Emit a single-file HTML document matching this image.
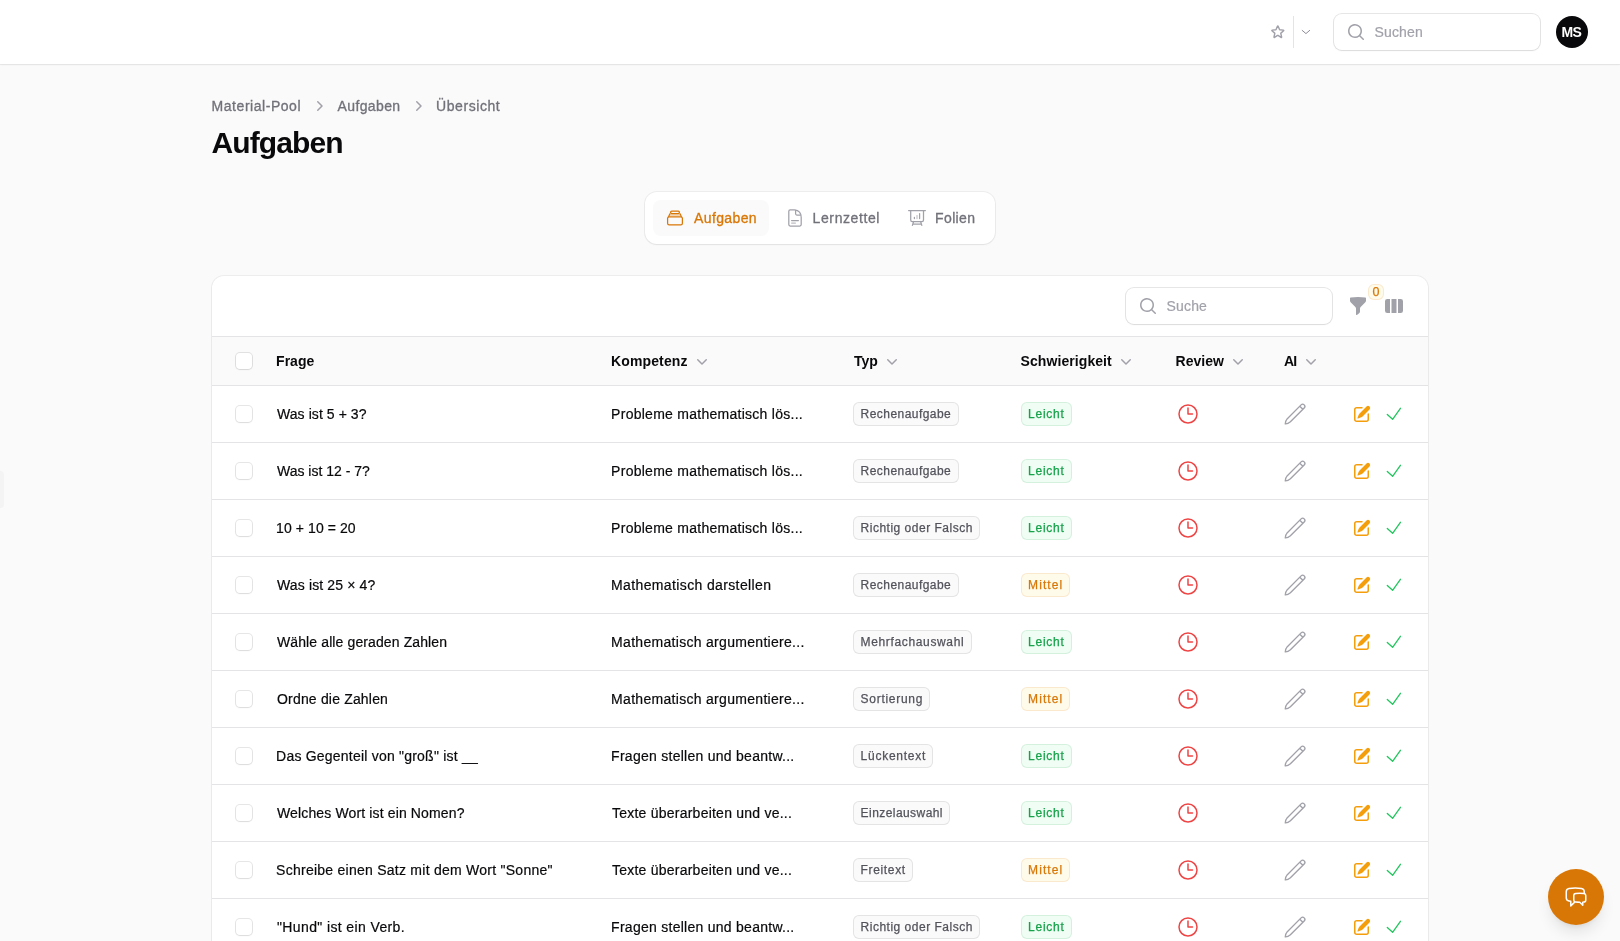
<!DOCTYPE html>
<html lang="de"><head><meta charset="utf-8"><title>Aufgaben</title>
<style>
*{box-sizing:border-box;margin:0;padding:0}
html,body{width:1620px;height:941px;overflow:hidden;background:#fafafa;font-family:"Liberation Sans",sans-serif;}
.abs{position:absolute}
.t{position:absolute;white-space:pre;line-height:1;}
.topbar{position:absolute;left:0;top:0;width:1620px;height:64px;background:#fff;box-shadow:0 0 0 1px rgba(9,9,11,.05),0 1px 2px rgba(0,0,0,.05)}
.inp{position:absolute;background:#fff;border-radius:8px;box-shadow:0 0 0 1px rgba(9,9,11,.1),0 1px 2px rgba(0,0,0,.05)}
.card{position:absolute;background:#fff;border-radius:12px;box-shadow:0 0 0 1px rgba(9,9,11,.05),0 1px 2px rgba(0,0,0,.05)}
.hl{position:absolute;left:212px;width:1216px;height:1px;background:#e4e4e7}
.cb{position:absolute;left:236px;width:16px;height:16px;border-radius:4px;background:#fff;box-shadow:0 0 0 1px rgba(9,9,11,.1),0 1px 2px rgba(0,0,0,.05)}
.bd{position:absolute;border-radius:6px;border:1px solid transparent}
svg{position:absolute;overflow:visible}
</style></head><body>
<div class="topbar"></div>
<!-- star -->
<svg style="left:1270.3px;top:23.6px" width="15.6" height="15.6" viewBox="0 0 24 24" fill="none" stroke="#a1a1aa" stroke-width="2.2" stroke-linecap="round" stroke-linejoin="round"><path d="M11.48 3.499a.562.562 0 0 1 1.04 0l2.125 5.111a.563.563 0 0 0 .475.345l5.518.442c.499.04.701.663.321.988l-4.204 3.602a.563.563 0 0 0-.182.557l1.285 5.385a.562.562 0 0 1-.84.61l-4.725-2.885a.562.562 0 0 0-.586 0L6.982 20.54a.562.562 0 0 1-.84-.61l1.285-5.386a.562.562 0 0 0-.182-.557l-4.204-3.602a.562.562 0 0 1 .321-.988l5.518-.442a.563.563 0 0 0 .475-.345L11.48 3.5Z"/></svg>
<div class="abs" style="left:1293px;top:16px;width:1px;height:32px;background:#e4e4e7"></div>
<svg style="left:0;top:0" width="1620" height="64"><polyline points="1302.2,30.4 1305.95,33.6 1309.7,30.4" fill="none" stroke="#8e8e98" stroke-width="1" stroke-linecap="round" stroke-linejoin="round"/></svg>
<div class="inp" style="left:1334px;top:14px;width:206px;height:36px"></div>
<svg style="left:1346px;top:22px" width="20" height="20" viewBox="0 0 20 20" fill="#a1a1aa"><path fill-rule="evenodd" clip-rule="evenodd" d="M9 3.5a5.5 5.5 0 1 0 0 11 5.5 5.5 0 0 0 0-11ZM2 9a7 7 0 1 1 12.452 4.391l3.328 3.329a.75.75 0 1 1-1.06 1.06l-3.329-3.328A7 7 0 0 1 2 9Z"/></svg>
<div class="abs" style="left:1556px;top:16px;width:32px;height:32px;border-radius:50%;background:#09090b"></div>

<!-- breadcrumb chevrons -->
<svg style="left:309px;top:96px" width="20" height="20" viewBox="0 0 20 20" fill="#a1a1aa"><path fill-rule="evenodd" clip-rule="evenodd" d="M8.22 5.22a.75.75 0 0 1 1.06 0l4.25 4.25a.75.75 0 0 1 0 1.06l-4.25 4.25a.75.75 0 0 1-1.06-1.06L11.94 10 8.22 6.28a.75.75 0 0 1 0-1.06Z"/></svg>
<svg style="left:408px;top:96px" width="20" height="20" viewBox="0 0 20 20" fill="#a1a1aa"><path fill-rule="evenodd" clip-rule="evenodd" d="M8.22 5.22a.75.75 0 0 1 1.06 0l4.25 4.25a.75.75 0 0 1 0 1.06l-4.25 4.25a.75.75 0 0 1-1.06-1.06L11.94 10 8.22 6.28a.75.75 0 0 1 0-1.06Z"/></svg>

<!-- tabs -->
<div class="card" style="left:645px;top:192px;width:350px;height:52px"></div>
<div class="abs" style="left:653px;top:200px;width:116px;height:36px;border-radius:8px;background:#fafafa"></div>
<svg style="left:0;top:0" width="1620" height="941"><g fill="none" stroke="#d97706" stroke-width="1.25" stroke-linejoin="round" stroke-linecap="round"><rect x="667.6" y="216.75" width="14.8" height="8" rx="1.6"/><path d="M668.7,216.6 L669.9,213.8 M681.3,216.6 L680.1,213.8"/><path d="M670.3,215 L679.7,215" stroke-opacity=".55" stroke-width="1.1"/><rect x="670.6" y="211.05" width="8.8" height="2.45" rx="1.1"/></g></svg>
<svg style="left:0;top:0" width="1620" height="941"><g fill="none" stroke="#a1a1aa" stroke-width="1.25" stroke-linejoin="round" stroke-linecap="round"><path d="M790.2,209.9 L794.5,209.9 Q801.2,210.5 801.2,217.5 L801.2,224.6 Q801.2,226 799.8,226 L790.2,226 Q788.8,226 788.8,224.6 L788.8,211.3 Q788.8,209.9 790.2,209.9 Z"/><path d="M795.6,210.3 L795.6,213.8 Q795.6,215 796.8,215 L800.6,215"/><path d="M791.6,220.5 L798.4,220.5"/><path d="M791.6,223.1 L795.4,223.1" stroke-opacity=".7"/></g></svg>
<svg style="left:0;top:0" width="1620" height="941"><g fill="none" stroke="#a1a1aa" stroke-width="1.25" stroke-linejoin="round" stroke-linecap="round"><path d="M908.6,210.5 L925.4,210.5"/><path d="M910.7,210.5 L910.7,219.9 Q910.7,221.5 912.3,221.5 L921.9,221.5 Q923.5,221.5 923.5,219.9 L923.5,210.5"/><path d="M913.6,221.5 L912.4,225.4 M920.6,221.5 L921.8,225.4 M913.2,224 L921,224"/><path d="M914.4,217.4 L914.4,218.6 M919.6,213.5 L919.6,218.6"/><path d="M917,215.6 L917,218.6" stroke-opacity=".6"/></g></svg>

<!-- table card -->
<div class="card" style="left:212px;top:276px;width:1216px;height:700px"></div>
<div class="abs" style="left:212px;top:337px;width:1216px;height:48px;background:#fafafa"></div>
<div class="hl" style="top:336px"></div>
<div class="hl" style="top:385px"></div>
<div class="hl" style="top:442px"></div>
<div class="hl" style="top:499px"></div>
<div class="hl" style="top:556px"></div>
<div class="hl" style="top:613px"></div>
<div class="hl" style="top:670px"></div>
<div class="hl" style="top:727px"></div>
<div class="hl" style="top:784px"></div>
<div class="hl" style="top:841px"></div>
<div class="hl" style="top:898px"></div>
<div class="hl" style="top:955px"></div>
<div class="inp" style="left:1126px;top:288px;width:206px;height:36px"></div>
<svg style="left:1138px;top:296px" width="20" height="20" viewBox="0 0 20 20" fill="#a1a1aa"><path fill-rule="evenodd" clip-rule="evenodd" d="M9 3.5a5.5 5.5 0 1 0 0 11 5.5 5.5 0 0 0 0-11ZM2 9a7 7 0 1 1 12.452 4.391l3.328 3.329a.75.75 0 1 1-1.06 1.06l-3.329-3.328A7 7 0 0 1 2 9Z"/></svg>
<svg style="left:1348px;top:296px" width="20" height="20" viewBox="0 0 20 20" fill="#a1a1aa"><path fill-rule="evenodd" clip-rule="evenodd" d="M2.628 1.601C5.028 1.206 7.49 1 10 1s4.973.206 7.372.601a.75.75 0 0 1 .628.74v2.288a2.25 2.25 0 0 1-.659 1.59l-4.682 4.683a2.25 2.25 0 0 0-.659 1.59v3.037c0 .684-.31 1.33-.844 1.757l-1.937 1.55A.75.75 0 0 1 8 18.25v-5.757a2.25 2.25 0 0 0-.659-1.591L2.659 6.22A2.25 2.25 0 0 1 2 4.629V2.34a.75.75 0 0 1 .628-.74Z"/></svg>
<div class="abs" style="left:1368px;top:284px;width:16px;height:16px;border-radius:6px;background:#fffbeb;border:1px solid rgba(217,119,6,.13)"></div>
<svg style="left:1384px;top:296px" width="20" height="20" viewBox="0 0 20 20" fill="#a1a1aa"><path d="M14 17h2.75A2.25 2.25 0 0 0 19 14.75v-9.5A2.25 2.25 0 0 0 16.75 3H14v14ZM12.5 3h-5v14h5V3ZM3.25 3H6v14H3.25A2.25 2.25 0 0 1 1 14.75v-9.5A2.25 2.25 0 0 1 3.25 3Z"/></svg>
<svg style="left:692.3px;top:351px" width="20" height="20" viewBox="0 0 20 20" fill="#a1a1aa"><path fill-rule="evenodd" clip-rule="evenodd" d="M5.22 8.22a.75.75 0 0 1 1.06 0L10 11.94l3.72-3.72a.75.75 0 1 1 1.06 1.06l-4.25 4.25a.75.75 0 0 1-1.06 0L5.22 9.28a.75.75 0 0 1 0-1.06Z"/></svg>
<svg style="left:882px;top:351px" width="20" height="20" viewBox="0 0 20 20" fill="#a1a1aa"><path fill-rule="evenodd" clip-rule="evenodd" d="M5.22 8.22a.75.75 0 0 1 1.06 0L10 11.94l3.72-3.72a.75.75 0 1 1 1.06 1.06l-4.25 4.25a.75.75 0 0 1-1.06 0L5.22 9.28a.75.75 0 0 1 0-1.06Z"/></svg>
<svg style="left:1116.2px;top:351px" width="20" height="20" viewBox="0 0 20 20" fill="#a1a1aa"><path fill-rule="evenodd" clip-rule="evenodd" d="M5.22 8.22a.75.75 0 0 1 1.06 0L10 11.94l3.72-3.72a.75.75 0 1 1 1.06 1.06l-4.25 4.25a.75.75 0 0 1-1.06 0L5.22 9.28a.75.75 0 0 1 0-1.06Z"/></svg>
<svg style="left:1228px;top:351px" width="20" height="20" viewBox="0 0 20 20" fill="#a1a1aa"><path fill-rule="evenodd" clip-rule="evenodd" d="M5.22 8.22a.75.75 0 0 1 1.06 0L10 11.94l3.72-3.72a.75.75 0 1 1 1.06 1.06l-4.25 4.25a.75.75 0 0 1-1.06 0L5.22 9.28a.75.75 0 0 1 0-1.06Z"/></svg>
<svg style="left:1301px;top:351px" width="20" height="20" viewBox="0 0 20 20" fill="#a1a1aa"><path fill-rule="evenodd" clip-rule="evenodd" d="M5.22 8.22a.75.75 0 0 1 1.06 0L10 11.94l3.72-3.72a.75.75 0 1 1 1.06 1.06l-4.25 4.25a.75.75 0 0 1-1.06 0L5.22 9.28a.75.75 0 0 1 0-1.06Z"/></svg>
<div class="cb" style="top:353px"></div>
<div class="cb" style="top:406px"></div>
<div class="cb" style="top:463px"></div>
<div class="cb" style="top:520px"></div>
<div class="cb" style="top:577px"></div>
<div class="cb" style="top:634px"></div>
<div class="cb" style="top:691px"></div>
<div class="cb" style="top:748px"></div>
<div class="cb" style="top:805px"></div>
<div class="cb" style="top:862px"></div>
<div class="cb" style="top:919px"></div>
<div class="bd" style="left:853px;top:402px;width:106.0px;height:24px;background:#fafafa;border-color:rgba(82,82,91,0.13)"></div>
<div class="bd" style="left:1021px;top:402px;width:51.0px;height:24px;background:#f0fdf4;border-color:rgba(22,163,74,0.13)"></div>
<div class="bd" style="left:853px;top:459px;width:106.0px;height:24px;background:#fafafa;border-color:rgba(82,82,91,0.13)"></div>
<div class="bd" style="left:1021px;top:459px;width:51.0px;height:24px;background:#f0fdf4;border-color:rgba(22,163,74,0.13)"></div>
<div class="bd" style="left:853px;top:516px;width:127.0px;height:24px;background:#fafafa;border-color:rgba(82,82,91,0.13)"></div>
<div class="bd" style="left:1021px;top:516px;width:51.0px;height:24px;background:#f0fdf4;border-color:rgba(22,163,74,0.13)"></div>
<div class="bd" style="left:853px;top:573px;width:106.0px;height:24px;background:#fafafa;border-color:rgba(82,82,91,0.13)"></div>
<div class="bd" style="left:1021px;top:573px;width:49.0px;height:24px;background:#fffbeb;border-color:rgba(217,119,6,0.13)"></div>
<div class="bd" style="left:853px;top:630px;width:119.0px;height:24px;background:#fafafa;border-color:rgba(82,82,91,0.13)"></div>
<div class="bd" style="left:1021px;top:630px;width:51.0px;height:24px;background:#f0fdf4;border-color:rgba(22,163,74,0.13)"></div>
<div class="bd" style="left:853px;top:687px;width:77.0px;height:24px;background:#fafafa;border-color:rgba(82,82,91,0.13)"></div>
<div class="bd" style="left:1021px;top:687px;width:49.0px;height:24px;background:#fffbeb;border-color:rgba(217,119,6,0.13)"></div>
<div class="bd" style="left:853px;top:744px;width:80.0px;height:24px;background:#fafafa;border-color:rgba(82,82,91,0.13)"></div>
<div class="bd" style="left:1021px;top:744px;width:51.0px;height:24px;background:#f0fdf4;border-color:rgba(22,163,74,0.13)"></div>
<div class="bd" style="left:853px;top:801px;width:97.0px;height:24px;background:#fafafa;border-color:rgba(82,82,91,0.13)"></div>
<div class="bd" style="left:1021px;top:801px;width:51.0px;height:24px;background:#f0fdf4;border-color:rgba(22,163,74,0.13)"></div>
<div class="bd" style="left:853px;top:858px;width:60.0px;height:24px;background:#fafafa;border-color:rgba(82,82,91,0.13)"></div>
<div class="bd" style="left:1021px;top:858px;width:49.0px;height:24px;background:#fffbeb;border-color:rgba(217,119,6,0.13)"></div>
<div class="bd" style="left:853px;top:915px;width:127.0px;height:24px;background:#fafafa;border-color:rgba(82,82,91,0.13)"></div>
<div class="bd" style="left:1021px;top:915px;width:51.0px;height:24px;background:#f0fdf4;border-color:rgba(22,163,74,0.13)"></div>
<svg style="left:1176px;top:402px" width="24" height="24" viewBox="0 0 24 24" fill="none" stroke="#ef4444" stroke-width="1.5" stroke-linecap="round" stroke-linejoin="round"><path d="M12 6v6h4.5m4.5 0a9 9 0 1 1-18 0 9 9 0 0 1 18 0Z"/></svg>
<svg style="left:0;top:0" width="1620" height="941"><g transform="translate(1284.9,424.2) rotate(-45)" fill="none" stroke="#a1a1aa" stroke-width="1.35" stroke-linejoin="round" stroke-linecap="round"><path d="M0.5,0 Q2,-1.85 5.6,-2.2 L25.1,-2.2 A2.2,2.2 0 0 1 25.1,2.2 L5.6,2.2 Q2,1.85 0.5,0 Z M23.2,-2.2 L23.2,2.2"/></g></svg>
<svg style="left:1352px;top:404px" width="20" height="20" viewBox="0 0 20 20" fill="#f59e0b"><path d="m5.433 13.917 1.262-3.155A4 4 0 0 1 7.58 9.42l6.92-6.918a2.121 2.121 0 0 1 3 3l-6.92 6.918c-.383.383-.84.685-1.343.886l-3.154 1.262a.5.5 0 0 1-.65-.65Z"/><path d="M3.5 5.75c0-.69.56-1.25 1.25-1.25H10A.75.75 0 0 0 10 3H4.75A2.75 2.75 0 0 0 2 5.75v9.5A2.75 2.75 0 0 0 4.75 18h9.5A2.75 2.75 0 0 0 17 15.25V10a.75.75 0 0 0-1.5 0v5.25c0 .69-.56 1.25-1.25 1.25h-9.5c-.69 0-1.25-.56-1.25-1.25v-9.5Z"/></svg>
<svg style="left:0;top:0" width="1620" height="941"><polyline points="1387.3,414.5 1392.6,419.3 1400.4,408.3" fill="none" stroke="#22c55e" stroke-width="1.3" stroke-linecap="round" stroke-linejoin="round"/></svg>
<svg style="left:1176px;top:459px" width="24" height="24" viewBox="0 0 24 24" fill="none" stroke="#ef4444" stroke-width="1.5" stroke-linecap="round" stroke-linejoin="round"><path d="M12 6v6h4.5m4.5 0a9 9 0 1 1-18 0 9 9 0 0 1 18 0Z"/></svg>
<svg style="left:0;top:0" width="1620" height="941"><g transform="translate(1284.9,481.2) rotate(-45)" fill="none" stroke="#a1a1aa" stroke-width="1.35" stroke-linejoin="round" stroke-linecap="round"><path d="M0.5,0 Q2,-1.85 5.6,-2.2 L25.1,-2.2 A2.2,2.2 0 0 1 25.1,2.2 L5.6,2.2 Q2,1.85 0.5,0 Z M23.2,-2.2 L23.2,2.2"/></g></svg>
<svg style="left:1352px;top:461px" width="20" height="20" viewBox="0 0 20 20" fill="#f59e0b"><path d="m5.433 13.917 1.262-3.155A4 4 0 0 1 7.58 9.42l6.92-6.918a2.121 2.121 0 0 1 3 3l-6.92 6.918c-.383.383-.84.685-1.343.886l-3.154 1.262a.5.5 0 0 1-.65-.65Z"/><path d="M3.5 5.75c0-.69.56-1.25 1.25-1.25H10A.75.75 0 0 0 10 3H4.75A2.75 2.75 0 0 0 2 5.75v9.5A2.75 2.75 0 0 0 4.75 18h9.5A2.75 2.75 0 0 0 17 15.25V10a.75.75 0 0 0-1.5 0v5.25c0 .69-.56 1.25-1.25 1.25h-9.5c-.69 0-1.25-.56-1.25-1.25v-9.5Z"/></svg>
<svg style="left:0;top:0" width="1620" height="941"><polyline points="1387.3,471.5 1392.6,476.3 1400.4,465.3" fill="none" stroke="#22c55e" stroke-width="1.3" stroke-linecap="round" stroke-linejoin="round"/></svg>
<svg style="left:1176px;top:516px" width="24" height="24" viewBox="0 0 24 24" fill="none" stroke="#ef4444" stroke-width="1.5" stroke-linecap="round" stroke-linejoin="round"><path d="M12 6v6h4.5m4.5 0a9 9 0 1 1-18 0 9 9 0 0 1 18 0Z"/></svg>
<svg style="left:0;top:0" width="1620" height="941"><g transform="translate(1284.9,538.2) rotate(-45)" fill="none" stroke="#a1a1aa" stroke-width="1.35" stroke-linejoin="round" stroke-linecap="round"><path d="M0.5,0 Q2,-1.85 5.6,-2.2 L25.1,-2.2 A2.2,2.2 0 0 1 25.1,2.2 L5.6,2.2 Q2,1.85 0.5,0 Z M23.2,-2.2 L23.2,2.2"/></g></svg>
<svg style="left:1352px;top:518px" width="20" height="20" viewBox="0 0 20 20" fill="#f59e0b"><path d="m5.433 13.917 1.262-3.155A4 4 0 0 1 7.58 9.42l6.92-6.918a2.121 2.121 0 0 1 3 3l-6.92 6.918c-.383.383-.84.685-1.343.886l-3.154 1.262a.5.5 0 0 1-.65-.65Z"/><path d="M3.5 5.75c0-.69.56-1.25 1.25-1.25H10A.75.75 0 0 0 10 3H4.75A2.75 2.75 0 0 0 2 5.75v9.5A2.75 2.75 0 0 0 4.75 18h9.5A2.75 2.75 0 0 0 17 15.25V10a.75.75 0 0 0-1.5 0v5.25c0 .69-.56 1.25-1.25 1.25h-9.5c-.69 0-1.25-.56-1.25-1.25v-9.5Z"/></svg>
<svg style="left:0;top:0" width="1620" height="941"><polyline points="1387.3,528.5 1392.6,533.3 1400.4,522.3" fill="none" stroke="#22c55e" stroke-width="1.3" stroke-linecap="round" stroke-linejoin="round"/></svg>
<svg style="left:1176px;top:573px" width="24" height="24" viewBox="0 0 24 24" fill="none" stroke="#ef4444" stroke-width="1.5" stroke-linecap="round" stroke-linejoin="round"><path d="M12 6v6h4.5m4.5 0a9 9 0 1 1-18 0 9 9 0 0 1 18 0Z"/></svg>
<svg style="left:0;top:0" width="1620" height="941"><g transform="translate(1284.9,595.2) rotate(-45)" fill="none" stroke="#a1a1aa" stroke-width="1.35" stroke-linejoin="round" stroke-linecap="round"><path d="M0.5,0 Q2,-1.85 5.6,-2.2 L25.1,-2.2 A2.2,2.2 0 0 1 25.1,2.2 L5.6,2.2 Q2,1.85 0.5,0 Z M23.2,-2.2 L23.2,2.2"/></g></svg>
<svg style="left:1352px;top:575px" width="20" height="20" viewBox="0 0 20 20" fill="#f59e0b"><path d="m5.433 13.917 1.262-3.155A4 4 0 0 1 7.58 9.42l6.92-6.918a2.121 2.121 0 0 1 3 3l-6.92 6.918c-.383.383-.84.685-1.343.886l-3.154 1.262a.5.5 0 0 1-.65-.65Z"/><path d="M3.5 5.75c0-.69.56-1.25 1.25-1.25H10A.75.75 0 0 0 10 3H4.75A2.75 2.75 0 0 0 2 5.75v9.5A2.75 2.75 0 0 0 4.75 18h9.5A2.75 2.75 0 0 0 17 15.25V10a.75.75 0 0 0-1.5 0v5.25c0 .69-.56 1.25-1.25 1.25h-9.5c-.69 0-1.25-.56-1.25-1.25v-9.5Z"/></svg>
<svg style="left:0;top:0" width="1620" height="941"><polyline points="1387.3,585.5 1392.6,590.3 1400.4,579.3" fill="none" stroke="#22c55e" stroke-width="1.3" stroke-linecap="round" stroke-linejoin="round"/></svg>
<svg style="left:1176px;top:630px" width="24" height="24" viewBox="0 0 24 24" fill="none" stroke="#ef4444" stroke-width="1.5" stroke-linecap="round" stroke-linejoin="round"><path d="M12 6v6h4.5m4.5 0a9 9 0 1 1-18 0 9 9 0 0 1 18 0Z"/></svg>
<svg style="left:0;top:0" width="1620" height="941"><g transform="translate(1284.9,652.2) rotate(-45)" fill="none" stroke="#a1a1aa" stroke-width="1.35" stroke-linejoin="round" stroke-linecap="round"><path d="M0.5,0 Q2,-1.85 5.6,-2.2 L25.1,-2.2 A2.2,2.2 0 0 1 25.1,2.2 L5.6,2.2 Q2,1.85 0.5,0 Z M23.2,-2.2 L23.2,2.2"/></g></svg>
<svg style="left:1352px;top:632px" width="20" height="20" viewBox="0 0 20 20" fill="#f59e0b"><path d="m5.433 13.917 1.262-3.155A4 4 0 0 1 7.58 9.42l6.92-6.918a2.121 2.121 0 0 1 3 3l-6.92 6.918c-.383.383-.84.685-1.343.886l-3.154 1.262a.5.5 0 0 1-.65-.65Z"/><path d="M3.5 5.75c0-.69.56-1.25 1.25-1.25H10A.75.75 0 0 0 10 3H4.75A2.75 2.75 0 0 0 2 5.75v9.5A2.75 2.75 0 0 0 4.75 18h9.5A2.75 2.75 0 0 0 17 15.25V10a.75.75 0 0 0-1.5 0v5.25c0 .69-.56 1.25-1.25 1.25h-9.5c-.69 0-1.25-.56-1.25-1.25v-9.5Z"/></svg>
<svg style="left:0;top:0" width="1620" height="941"><polyline points="1387.3,642.5 1392.6,647.3 1400.4,636.3" fill="none" stroke="#22c55e" stroke-width="1.3" stroke-linecap="round" stroke-linejoin="round"/></svg>
<svg style="left:1176px;top:687px" width="24" height="24" viewBox="0 0 24 24" fill="none" stroke="#ef4444" stroke-width="1.5" stroke-linecap="round" stroke-linejoin="round"><path d="M12 6v6h4.5m4.5 0a9 9 0 1 1-18 0 9 9 0 0 1 18 0Z"/></svg>
<svg style="left:0;top:0" width="1620" height="941"><g transform="translate(1284.9,709.2) rotate(-45)" fill="none" stroke="#a1a1aa" stroke-width="1.35" stroke-linejoin="round" stroke-linecap="round"><path d="M0.5,0 Q2,-1.85 5.6,-2.2 L25.1,-2.2 A2.2,2.2 0 0 1 25.1,2.2 L5.6,2.2 Q2,1.85 0.5,0 Z M23.2,-2.2 L23.2,2.2"/></g></svg>
<svg style="left:1352px;top:689px" width="20" height="20" viewBox="0 0 20 20" fill="#f59e0b"><path d="m5.433 13.917 1.262-3.155A4 4 0 0 1 7.58 9.42l6.92-6.918a2.121 2.121 0 0 1 3 3l-6.92 6.918c-.383.383-.84.685-1.343.886l-3.154 1.262a.5.5 0 0 1-.65-.65Z"/><path d="M3.5 5.75c0-.69.56-1.25 1.25-1.25H10A.75.75 0 0 0 10 3H4.75A2.75 2.75 0 0 0 2 5.75v9.5A2.75 2.75 0 0 0 4.75 18h9.5A2.75 2.75 0 0 0 17 15.25V10a.75.75 0 0 0-1.5 0v5.25c0 .69-.56 1.25-1.25 1.25h-9.5c-.69 0-1.25-.56-1.25-1.25v-9.5Z"/></svg>
<svg style="left:0;top:0" width="1620" height="941"><polyline points="1387.3,699.5 1392.6,704.3 1400.4,693.3" fill="none" stroke="#22c55e" stroke-width="1.3" stroke-linecap="round" stroke-linejoin="round"/></svg>
<svg style="left:1176px;top:744px" width="24" height="24" viewBox="0 0 24 24" fill="none" stroke="#ef4444" stroke-width="1.5" stroke-linecap="round" stroke-linejoin="round"><path d="M12 6v6h4.5m4.5 0a9 9 0 1 1-18 0 9 9 0 0 1 18 0Z"/></svg>
<svg style="left:0;top:0" width="1620" height="941"><g transform="translate(1284.9,766.2) rotate(-45)" fill="none" stroke="#a1a1aa" stroke-width="1.35" stroke-linejoin="round" stroke-linecap="round"><path d="M0.5,0 Q2,-1.85 5.6,-2.2 L25.1,-2.2 A2.2,2.2 0 0 1 25.1,2.2 L5.6,2.2 Q2,1.85 0.5,0 Z M23.2,-2.2 L23.2,2.2"/></g></svg>
<svg style="left:1352px;top:746px" width="20" height="20" viewBox="0 0 20 20" fill="#f59e0b"><path d="m5.433 13.917 1.262-3.155A4 4 0 0 1 7.58 9.42l6.92-6.918a2.121 2.121 0 0 1 3 3l-6.92 6.918c-.383.383-.84.685-1.343.886l-3.154 1.262a.5.5 0 0 1-.65-.65Z"/><path d="M3.5 5.75c0-.69.56-1.25 1.25-1.25H10A.75.75 0 0 0 10 3H4.75A2.75 2.75 0 0 0 2 5.75v9.5A2.75 2.75 0 0 0 4.75 18h9.5A2.75 2.75 0 0 0 17 15.25V10a.75.75 0 0 0-1.5 0v5.25c0 .69-.56 1.25-1.25 1.25h-9.5c-.69 0-1.25-.56-1.25-1.25v-9.5Z"/></svg>
<svg style="left:0;top:0" width="1620" height="941"><polyline points="1387.3,756.5 1392.6,761.3 1400.4,750.3" fill="none" stroke="#22c55e" stroke-width="1.3" stroke-linecap="round" stroke-linejoin="round"/></svg>
<svg style="left:1176px;top:801px" width="24" height="24" viewBox="0 0 24 24" fill="none" stroke="#ef4444" stroke-width="1.5" stroke-linecap="round" stroke-linejoin="round"><path d="M12 6v6h4.5m4.5 0a9 9 0 1 1-18 0 9 9 0 0 1 18 0Z"/></svg>
<svg style="left:0;top:0" width="1620" height="941"><g transform="translate(1284.9,823.2) rotate(-45)" fill="none" stroke="#a1a1aa" stroke-width="1.35" stroke-linejoin="round" stroke-linecap="round"><path d="M0.5,0 Q2,-1.85 5.6,-2.2 L25.1,-2.2 A2.2,2.2 0 0 1 25.1,2.2 L5.6,2.2 Q2,1.85 0.5,0 Z M23.2,-2.2 L23.2,2.2"/></g></svg>
<svg style="left:1352px;top:803px" width="20" height="20" viewBox="0 0 20 20" fill="#f59e0b"><path d="m5.433 13.917 1.262-3.155A4 4 0 0 1 7.58 9.42l6.92-6.918a2.121 2.121 0 0 1 3 3l-6.92 6.918c-.383.383-.84.685-1.343.886l-3.154 1.262a.5.5 0 0 1-.65-.65Z"/><path d="M3.5 5.75c0-.69.56-1.25 1.25-1.25H10A.75.75 0 0 0 10 3H4.75A2.75 2.75 0 0 0 2 5.75v9.5A2.75 2.75 0 0 0 4.75 18h9.5A2.75 2.75 0 0 0 17 15.25V10a.75.75 0 0 0-1.5 0v5.25c0 .69-.56 1.25-1.25 1.25h-9.5c-.69 0-1.25-.56-1.25-1.25v-9.5Z"/></svg>
<svg style="left:0;top:0" width="1620" height="941"><polyline points="1387.3,813.5 1392.6,818.3 1400.4,807.3" fill="none" stroke="#22c55e" stroke-width="1.3" stroke-linecap="round" stroke-linejoin="round"/></svg>
<svg style="left:1176px;top:858px" width="24" height="24" viewBox="0 0 24 24" fill="none" stroke="#ef4444" stroke-width="1.5" stroke-linecap="round" stroke-linejoin="round"><path d="M12 6v6h4.5m4.5 0a9 9 0 1 1-18 0 9 9 0 0 1 18 0Z"/></svg>
<svg style="left:0;top:0" width="1620" height="941"><g transform="translate(1284.9,880.2) rotate(-45)" fill="none" stroke="#a1a1aa" stroke-width="1.35" stroke-linejoin="round" stroke-linecap="round"><path d="M0.5,0 Q2,-1.85 5.6,-2.2 L25.1,-2.2 A2.2,2.2 0 0 1 25.1,2.2 L5.6,2.2 Q2,1.85 0.5,0 Z M23.2,-2.2 L23.2,2.2"/></g></svg>
<svg style="left:1352px;top:860px" width="20" height="20" viewBox="0 0 20 20" fill="#f59e0b"><path d="m5.433 13.917 1.262-3.155A4 4 0 0 1 7.58 9.42l6.92-6.918a2.121 2.121 0 0 1 3 3l-6.92 6.918c-.383.383-.84.685-1.343.886l-3.154 1.262a.5.5 0 0 1-.65-.65Z"/><path d="M3.5 5.75c0-.69.56-1.25 1.25-1.25H10A.75.75 0 0 0 10 3H4.75A2.75 2.75 0 0 0 2 5.75v9.5A2.75 2.75 0 0 0 4.75 18h9.5A2.75 2.75 0 0 0 17 15.25V10a.75.75 0 0 0-1.5 0v5.25c0 .69-.56 1.25-1.25 1.25h-9.5c-.69 0-1.25-.56-1.25-1.25v-9.5Z"/></svg>
<svg style="left:0;top:0" width="1620" height="941"><polyline points="1387.3,870.5 1392.6,875.3 1400.4,864.3" fill="none" stroke="#22c55e" stroke-width="1.3" stroke-linecap="round" stroke-linejoin="round"/></svg>
<svg style="left:1176px;top:915px" width="24" height="24" viewBox="0 0 24 24" fill="none" stroke="#ef4444" stroke-width="1.5" stroke-linecap="round" stroke-linejoin="round"><path d="M12 6v6h4.5m4.5 0a9 9 0 1 1-18 0 9 9 0 0 1 18 0Z"/></svg>
<svg style="left:0;top:0" width="1620" height="941"><g transform="translate(1284.9,937.2) rotate(-45)" fill="none" stroke="#a1a1aa" stroke-width="1.35" stroke-linejoin="round" stroke-linecap="round"><path d="M0.5,0 Q2,-1.85 5.6,-2.2 L25.1,-2.2 A2.2,2.2 0 0 1 25.1,2.2 L5.6,2.2 Q2,1.85 0.5,0 Z M23.2,-2.2 L23.2,2.2"/></g></svg>
<svg style="left:1352px;top:917px" width="20" height="20" viewBox="0 0 20 20" fill="#f59e0b"><path d="m5.433 13.917 1.262-3.155A4 4 0 0 1 7.58 9.42l6.92-6.918a2.121 2.121 0 0 1 3 3l-6.92 6.918c-.383.383-.84.685-1.343.886l-3.154 1.262a.5.5 0 0 1-.65-.65Z"/><path d="M3.5 5.75c0-.69.56-1.25 1.25-1.25H10A.75.75 0 0 0 10 3H4.75A2.75 2.75 0 0 0 2 5.75v9.5A2.75 2.75 0 0 0 4.75 18h9.5A2.75 2.75 0 0 0 17 15.25V10a.75.75 0 0 0-1.5 0v5.25c0 .69-.56 1.25-1.25 1.25h-9.5c-.69 0-1.25-.56-1.25-1.25v-9.5Z"/></svg>
<svg style="left:0;top:0" width="1620" height="941"><polyline points="1387.3,927.5 1392.6,932.3 1400.4,921.3" fill="none" stroke="#22c55e" stroke-width="1.3" stroke-linecap="round" stroke-linejoin="round"/></svg>
<div id="txt" style="position:absolute;left:0;top:0;width:1620px;height:941px;will-change:transform">
<span class="t" id="t0" style="left:211.60px;top:99.15px;font-size:14px;font-weight:500;color:#71717a;-webkit-text-stroke:0.32px #71717a;letter-spacing:0.540px">Material-Pool</span>
<span class="t" id="t1" style="left:337.50px;top:99.15px;font-size:14px;font-weight:500;color:#71717a;-webkit-text-stroke:0.32px #71717a;letter-spacing:0.386px">Aufgaben</span>
<span class="t" id="t2" style="left:436.10px;top:99.15px;font-size:14px;font-weight:500;color:#71717a;-webkit-text-stroke:0.32px #71717a;letter-spacing:0.562px">Übersicht</span>
<span class="t" id="t3" style="left:211.60px;top:127.61px;font-size:30px;font-weight:700;color:#09090b;letter-spacing:-0.900px">Aufgaben</span>
<span class="t" id="t4" style="left:694.00px;top:211.35px;font-size:14px;font-weight:500;color:#d97706;-webkit-text-stroke:0.32px #d97706;letter-spacing:0.386px">Aufgaben</span>
<span class="t" id="t5" style="left:812.60px;top:211.35px;font-size:14px;font-weight:500;color:#71717a;-webkit-text-stroke:0.32px #71717a;letter-spacing:0.600px">Lernzettel</span>
<span class="t" id="t6" style="left:935.10px;top:211.35px;font-size:14px;font-weight:500;color:#71717a;-webkit-text-stroke:0.32px #71717a;letter-spacing:0.360px">Folien</span>
<span class="t" id="t7" style="left:1374.48px;top:25.15px;font-size:14px;font-weight:400;color:#a1a1aa;-webkit-text-stroke:0.2px #a1a1aa;letter-spacing:0.144px">Suchen</span>
<span class="t" id="t8" style="left:1561.48px;top:25.15px;font-size:14px;font-weight:600;color:#ffffff;letter-spacing:-0.540px">MS</span>
<span class="t" id="t9" style="left:1166.48px;top:299.15px;font-size:14px;font-weight:400;color:#a1a1aa;-webkit-text-stroke:0.2px #a1a1aa;letter-spacing:0.180px">Suche</span>
<span class="t" id="t10" style="left:1372.48px;top:285.72px;font-size:12.5px;font-weight:500;color:#d97706;-webkit-text-stroke:0.25px #d97706;letter-spacing:0.000px">0</span>
<span class="t" id="t11" style="left:276.10px;top:354.15px;font-size:14px;font-weight:600;color:#09090b;letter-spacing:0.000px">Frage</span>
<span class="t" id="t12" style="left:611.10px;top:354.15px;font-size:14px;font-weight:600;color:#09090b;letter-spacing:0.113px">Kompetenz</span>
<span class="t" id="t13" style="left:854.00px;top:354.15px;font-size:14px;font-weight:600;color:#09090b;letter-spacing:0.000px">Typ</span>
<span class="t" id="t14" style="left:1020.60px;top:354.15px;font-size:14px;font-weight:600;color:#09090b;letter-spacing:0.075px">Schwierigkeit</span>
<span class="t" id="t15" style="left:1175.60px;top:354.15px;font-size:14px;font-weight:600;color:#09090b;letter-spacing:0.000px">Review</span>
<span class="t" id="t16" style="left:1284.00px;top:354.15px;font-size:14px;font-weight:600;color:#09090b;letter-spacing:-0.900px">AI</span>
<span class="t" id="t17" style="left:277.00px;top:407.15px;font-size:14px;font-weight:400;color:#09090b;-webkit-text-stroke:0.2px #09090b;letter-spacing:0.069px">Was ist 5 + 3?</span>
<span class="t" id="t18" style="left:611.10px;top:407.15px;font-size:14px;font-weight:400;color:#09090b;-webkit-text-stroke:0.2px #09090b;letter-spacing:0.267px">Probleme mathematisch lös...</span>
<span class="t" id="t19" style="left:860.60px;top:407.84px;font-size:12px;font-weight:500;color:#52525b;-webkit-text-stroke:0.25px #52525b;letter-spacing:0.450px">Rechenaufgabe</span>
<span class="t" id="t20" style="left:1028.10px;top:407.84px;font-size:12px;font-weight:500;color:#16a34a;-webkit-text-stroke:0.25px #16a34a;letter-spacing:0.720px">Leicht</span>
<span class="t" id="t21" style="left:277.00px;top:464.15px;font-size:14px;font-weight:400;color:#09090b;-webkit-text-stroke:0.2px #09090b;letter-spacing:0.000px">Was ist 12 - 7?</span>
<span class="t" id="t22" style="left:611.10px;top:464.15px;font-size:14px;font-weight:400;color:#09090b;-webkit-text-stroke:0.2px #09090b;letter-spacing:0.267px">Probleme mathematisch lös...</span>
<span class="t" id="t23" style="left:860.60px;top:464.84px;font-size:12px;font-weight:500;color:#52525b;-webkit-text-stroke:0.25px #52525b;letter-spacing:0.450px">Rechenaufgabe</span>
<span class="t" id="t24" style="left:1028.10px;top:464.84px;font-size:12px;font-weight:500;color:#16a34a;-webkit-text-stroke:0.25px #16a34a;letter-spacing:0.720px">Leicht</span>
<span class="t" id="t25" style="left:276.10px;top:521.15px;font-size:14px;font-weight:400;color:#09090b;-webkit-text-stroke:0.2px #09090b;letter-spacing:0.082px">10 + 10 = 20</span>
<span class="t" id="t26" style="left:611.10px;top:521.15px;font-size:14px;font-weight:400;color:#09090b;-webkit-text-stroke:0.2px #09090b;letter-spacing:0.267px">Probleme mathematisch lös...</span>
<span class="t" id="t27" style="left:860.60px;top:521.84px;font-size:12px;font-weight:500;color:#52525b;-webkit-text-stroke:0.25px #52525b;letter-spacing:0.500px">Richtig oder Falsch</span>
<span class="t" id="t28" style="left:1028.10px;top:521.84px;font-size:12px;font-weight:500;color:#16a34a;-webkit-text-stroke:0.25px #16a34a;letter-spacing:0.720px">Leicht</span>
<span class="t" id="t29" style="left:277.00px;top:578.15px;font-size:14px;font-weight:400;color:#09090b;-webkit-text-stroke:0.2px #09090b;letter-spacing:0.129px">Was ist 25 × 4?</span>
<span class="t" id="t30" style="left:611.10px;top:578.15px;font-size:14px;font-weight:400;color:#09090b;-webkit-text-stroke:0.2px #09090b;letter-spacing:0.368px">Mathematisch darstellen</span>
<span class="t" id="t31" style="left:860.60px;top:578.84px;font-size:12px;font-weight:500;color:#52525b;-webkit-text-stroke:0.25px #52525b;letter-spacing:0.450px">Rechenaufgabe</span>
<span class="t" id="t32" style="left:1028.10px;top:578.84px;font-size:12px;font-weight:500;color:#d97706;-webkit-text-stroke:0.25px #d97706;letter-spacing:1.080px">Mittel</span>
<span class="t" id="t33" style="left:277.00px;top:635.15px;font-size:14px;font-weight:400;color:#09090b;-webkit-text-stroke:0.2px #09090b;letter-spacing:0.112px">Wähle alle geraden Zahlen</span>
<span class="t" id="t34" style="left:611.10px;top:635.15px;font-size:14px;font-weight:400;color:#09090b;-webkit-text-stroke:0.2px #09090b;letter-spacing:0.300px">Mathematisch argumentiere...</span>
<span class="t" id="t35" style="left:860.60px;top:635.84px;font-size:12px;font-weight:500;color:#52525b;-webkit-text-stroke:0.25px #52525b;letter-spacing:0.643px">Mehrfachauswahl</span>
<span class="t" id="t36" style="left:1028.10px;top:635.84px;font-size:12px;font-weight:500;color:#16a34a;-webkit-text-stroke:0.25px #16a34a;letter-spacing:0.720px">Leicht</span>
<span class="t" id="t37" style="left:277.00px;top:692.15px;font-size:14px;font-weight:400;color:#09090b;-webkit-text-stroke:0.2px #09090b;letter-spacing:0.180px">Ordne die Zahlen</span>
<span class="t" id="t38" style="left:611.10px;top:692.15px;font-size:14px;font-weight:400;color:#09090b;-webkit-text-stroke:0.2px #09090b;letter-spacing:0.300px">Mathematisch argumentiere...</span>
<span class="t" id="t39" style="left:860.60px;top:692.84px;font-size:12px;font-weight:500;color:#52525b;-webkit-text-stroke:0.25px #52525b;letter-spacing:0.720px">Sortierung</span>
<span class="t" id="t40" style="left:1028.10px;top:692.84px;font-size:12px;font-weight:500;color:#d97706;-webkit-text-stroke:0.25px #d97706;letter-spacing:1.080px">Mittel</span>
<span class="t" id="t41" style="left:276.10px;top:749.15px;font-size:14px;font-weight:400;color:#09090b;-webkit-text-stroke:0.2px #09090b;letter-spacing:0.216px">Das Gegenteil von "groß" ist __</span>
<span class="t" id="t42" style="left:611.10px;top:749.15px;font-size:14px;font-weight:400;color:#09090b;-webkit-text-stroke:0.2px #09090b;letter-spacing:0.267px">Fragen stellen und beantw...</span>
<span class="t" id="t43" style="left:860.60px;top:749.84px;font-size:12px;font-weight:500;color:#52525b;-webkit-text-stroke:0.25px #52525b;letter-spacing:0.740px">Lückentext</span>
<span class="t" id="t44" style="left:1028.10px;top:749.84px;font-size:12px;font-weight:500;color:#16a34a;-webkit-text-stroke:0.25px #16a34a;letter-spacing:0.720px">Leicht</span>
<span class="t" id="t45" style="left:277.00px;top:806.15px;font-size:14px;font-weight:400;color:#09090b;-webkit-text-stroke:0.2px #09090b;letter-spacing:0.138px">Welches Wort ist ein Nomen?</span>
<span class="t" id="t46" style="left:612.00px;top:806.15px;font-size:14px;font-weight:400;color:#09090b;-webkit-text-stroke:0.2px #09090b;letter-spacing:0.233px">Texte überarbeiten und ve...</span>
<span class="t" id="t47" style="left:860.60px;top:806.84px;font-size:12px;font-weight:500;color:#52525b;-webkit-text-stroke:0.25px #52525b;letter-spacing:0.435px">Einzelauswahl</span>
<span class="t" id="t48" style="left:1028.10px;top:806.84px;font-size:12px;font-weight:500;color:#16a34a;-webkit-text-stroke:0.25px #16a34a;letter-spacing:0.720px">Leicht</span>
<span class="t" id="t49" style="left:276.10px;top:863.15px;font-size:14px;font-weight:400;color:#09090b;-webkit-text-stroke:0.2px #09090b;letter-spacing:0.254px">Schreibe einen Satz mit dem Wort "Sonne"</span>
<span class="t" id="t50" style="left:612.00px;top:863.15px;font-size:14px;font-weight:400;color:#09090b;-webkit-text-stroke:0.2px #09090b;letter-spacing:0.233px">Texte überarbeiten und ve...</span>
<span class="t" id="t51" style="left:860.60px;top:863.84px;font-size:12px;font-weight:500;color:#52525b;-webkit-text-stroke:0.25px #52525b;letter-spacing:0.643px">Freitext</span>
<span class="t" id="t52" style="left:1028.10px;top:863.84px;font-size:12px;font-weight:500;color:#d97706;-webkit-text-stroke:0.25px #d97706;letter-spacing:1.080px">Mittel</span>
<span class="t" id="t53" style="left:277.00px;top:920.15px;font-size:14px;font-weight:400;color:#09090b;-webkit-text-stroke:0.2px #09090b;letter-spacing:0.379px">"Hund" ist ein Verb.</span>
<span class="t" id="t54" style="left:611.10px;top:920.15px;font-size:14px;font-weight:400;color:#09090b;-webkit-text-stroke:0.2px #09090b;letter-spacing:0.267px">Fragen stellen und beantw...</span>
<span class="t" id="t55" style="left:860.60px;top:920.84px;font-size:12px;font-weight:500;color:#52525b;-webkit-text-stroke:0.25px #52525b;letter-spacing:0.500px">Richtig oder Falsch</span>
<span class="t" id="t56" style="left:1028.10px;top:920.84px;font-size:12px;font-weight:500;color:#16a34a;-webkit-text-stroke:0.25px #16a34a;letter-spacing:0.720px">Leicht</span>
</div>

<!-- left handle -->
<div class="abs" style="left:-4px;top:471px;width:8px;height:37px;border-radius:4px;background:#f4f4f5"></div>
<!-- chat fab -->
<div class="abs" style="left:1548px;top:869px;width:56px;height:56px;border-radius:50%;background:#d97706;box-shadow:0 10px 15px -3px rgba(0,0,0,.1),0 4px 6px -4px rgba(0,0,0,.1)"></div>
<svg style="left:1564px;top:885px" width="24" height="24" viewBox="0 0 24 24" fill="none" stroke="#fff" stroke-width="1.5" stroke-linecap="round" stroke-linejoin="round"><path d="M20.25 8.511c.884.284 1.5 1.128 1.5 2.097v4.286c0 1.136-.847 2.1-1.98 2.193-.34.027-.68.052-1.02.072v3.091l-3-3c-1.354 0-2.694-.055-4.02-.163a2.115 2.115 0 0 1-.825-.242m9.345-8.334a2.126 2.126 0 0 0-.476-.095 48.64 48.64 0 0 0-8.048 0c-1.131.094-1.976 1.057-1.976 2.192v4.286c0 .837.46 1.58 1.155 1.951m9.345-8.334V6.637c0-1.621-1.152-3.026-2.76-3.235A48.455 48.455 0 0 0 11.25 3c-2.115 0-4.198.137-6.24.402-1.608.209-2.76 1.614-2.76 3.235v6.226c0 1.621 1.152 3.026 2.76 3.235.577.075 1.157.14 1.74.194V21l4.155-4.155"/></svg>
</body></html>
